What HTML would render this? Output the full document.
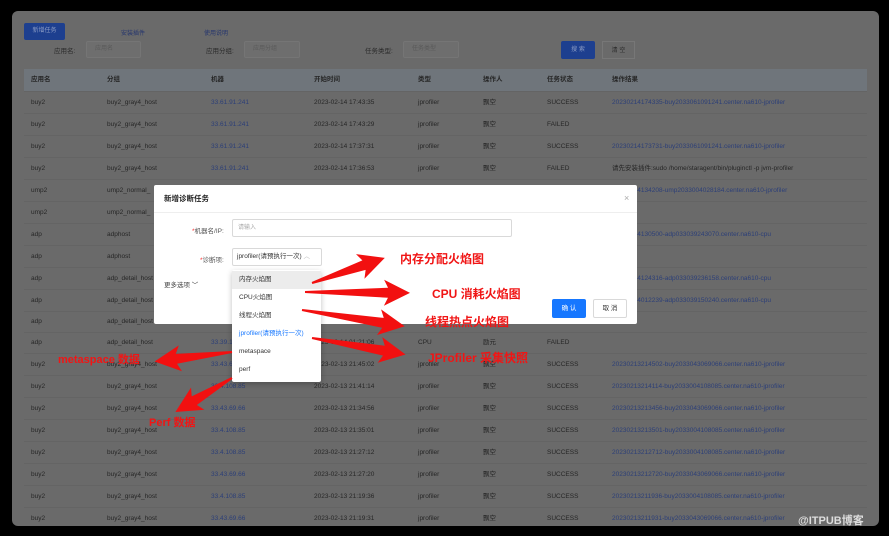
<!DOCTYPE html>
<html><head><meta charset="utf-8"><style>
*{margin:0;padding:0;box-sizing:border-box}
body{width:889px;height:536px;background:#000;font-family:"Liberation Sans","Noto Sans CJK SC",sans-serif;position:relative;overflow:hidden;font-size:7px;color:#262626}
.panel{position:absolute;left:12px;top:11px;width:867px;height:515px;background:#6a6a6a;border-radius:6px;overflow:hidden}
.abs{position:absolute;white-space:nowrap}
.btn{position:absolute;background:#1d3f8f;color:#8a9bc4;font-size:6px;text-align:center;border-radius:2px}
.inp{position:absolute;border:1px solid #757575;background:#6e6e6e;color:#595959;font-size:6px;padding-left:8px;border-radius:2px;line-height:15px;height:17px}
.lbl{position:absolute;font-size:6.5px;color:#2a2a2a}
.row{position:absolute;left:12px;width:843px;height:22px;border-bottom:1px solid #646464}
.row span{position:absolute;top:7px;font-size:6.5px;white-space:nowrap;line-height:8px}
.lk{color:#2c3f78}
.modal{position:absolute;left:154px;top:185px;width:483px;height:139px;background:#fff;border-radius:2px}
.dd{position:absolute;left:232px;top:270px;width:89px;height:112px;background:#fff;border-radius:2px;box-shadow:0 2px 6px rgba(0,0,0,.25)}
.dd div{height:18px;line-height:18px;padding-left:7px;font-size:6.5px;color:#333}
.red{position:absolute;color:#f01515;font-weight:bold;font-size:12px;white-space:nowrap}
</style></head><body>
<div class="panel">
<div class="btn" style="left:12px;top:12px;width:41px;height:17px;line-height:17px">新增任务</div>
<div class="abs" style="left:109px;top:17px;font-size:6px;color:#24356e">安装插件</div>
<div class="abs" style="left:192px;top:17px;font-size:6px;color:#24356e">使用说明</div>
<div class="lbl" style="left:42px;top:34px">应用名:</div>
<div class="inp" style="left:74px;top:30px;width:55px">应用名</div>
<div class="lbl" style="left:194px;top:34px">应用分组:</div>
<div class="inp" style="left:232px;top:30px;width:56px">应用分组</div>
<div class="lbl" style="left:353px;top:34px">任务类型:</div>
<div class="inp" style="left:391px;top:30px;width:56px">任务类型</div>
<div class="btn" style="left:549px;top:30px;width:34px;height:18px;line-height:18px">搜 索</div>
<div class="abs" style="left:590px;top:30px;width:33px;height:18px;line-height:18px;border:1px solid #777;text-align:center;font-size:6px;color:#2a2a2a">清 空</div>
<div class="row" style="top:58px;background:#6f757b;height:23px"><span style="left:7px;font-weight:bold">应用名</span><span style="left:83px;font-weight:bold">分组</span><span style="left:187px;font-weight:bold">机器</span><span style="left:290px;font-weight:bold">开始时间</span><span style="left:394px;font-weight:bold">类型</span><span style="left:459px;font-weight:bold">操作人</span><span style="left:523px;font-weight:bold">任务状态</span><span style="left:588px;font-weight:bold">操作结果</span></div>
<div class="row" style="top:81px"><span style="left:7px">buy2</span><span style="left:83px">buy2_gray4_host</span><span class="lk" style="left:187px">33.61.91.241</span><span style="left:290px">2023-02-14 17:43:35</span><span style="left:394px">jprofiler</span><span style="left:459px">飘空</span><span style="left:523px">SUCCESS</span><span class="lk" style="left:588px">20230214174335-buy2033061091241.center.na610-jprofiler</span></div>
<div class="row" style="top:103px"><span style="left:7px">buy2</span><span style="left:83px">buy2_gray4_host</span><span class="lk" style="left:187px">33.61.91.241</span><span style="left:290px">2023-02-14 17:43:29</span><span style="left:394px">jprofiler</span><span style="left:459px">飘空</span><span style="left:523px">FAILED</span></div>
<div class="row" style="top:125px"><span style="left:7px">buy2</span><span style="left:83px">buy2_gray4_host</span><span class="lk" style="left:187px">33.61.91.241</span><span style="left:290px">2023-02-14 17:37:31</span><span style="left:394px">jprofiler</span><span style="left:459px">飘空</span><span style="left:523px">SUCCESS</span><span class="lk" style="left:588px">20230214173731-buy2033061091241.center.na610-jprofiler</span></div>
<div class="row" style="top:147px"><span style="left:7px">buy2</span><span style="left:83px">buy2_gray4_host</span><span class="lk" style="left:187px">33.61.91.241</span><span style="left:290px">2023-02-14 17:36:53</span><span style="left:394px">jprofiler</span><span style="left:459px">飘空</span><span style="left:523px">FAILED</span><span style="left:588px">请先安装插件:sudo /home/staragent/bin/pluginctl -p jvm-profiler</span></div>
<div class="row" style="top:169px"><span style="left:7px">ump2</span><span style="left:83px">ump2_normal_</span><span class="lk" style="left:588px">20230214134208-ump2033004028184.center.na610-jprofiler</span></div>
<div class="row" style="top:191px"><span style="left:7px">ump2</span><span style="left:83px">ump2_normal_</span></div>
<div class="row" style="top:213px"><span style="left:7px">adp</span><span style="left:83px">adphost</span><span class="lk" style="left:588px">20230214130500-adp033039243070.center.na610-cpu</span></div>
<div class="row" style="top:235px"><span style="left:7px">adp</span><span style="left:83px">adphost</span></div>
<div class="row" style="top:257px"><span style="left:7px">adp</span><span style="left:83px">adp_detail_host</span><span class="lk" style="left:588px">20230214124316-adp033039236158.center.na610-cpu</span></div>
<div class="row" style="top:279px"><span style="left:7px">adp</span><span style="left:83px">adp_detail_host</span><span class="lk" style="left:588px">20230214012239-adp033039150240.center.na610-cpu</span></div>
<div class="row" style="top:300px"><span style="left:7px">adp</span><span style="left:83px">adp_detail_host</span></div>
<div class="row" style="top:321px"><span style="left:7px">adp</span><span style="left:83px">adp_detail_host</span><span class="lk" style="left:187px">33.39.1</span><span style="left:290px">2023-02-14 01:21:06</span><span style="left:394px">CPU</span><span style="left:459px">励元</span><span style="left:523px">FAILED</span></div>
<div class="row" style="top:343px"><span style="left:7px">buy2</span><span style="left:83px">buy2_gray4_host</span><span class="lk" style="left:187px">33.43.6</span><span style="left:290px">2023-02-13 21:45:02</span><span style="left:394px">jprofiler</span><span style="left:459px">飘空</span><span style="left:523px">SUCCESS</span><span class="lk" style="left:588px">20230213214502-buy2033043069066.center.na610-jprofiler</span></div>
<div class="row" style="top:365px"><span style="left:7px">buy2</span><span style="left:83px">buy2_gray4_host</span><span class="lk" style="left:187px">33.4.108.85</span><span style="left:290px">2023-02-13 21:41:14</span><span style="left:394px">jprofiler</span><span style="left:459px">飘空</span><span style="left:523px">SUCCESS</span><span class="lk" style="left:588px">20230213214114-buy2033004108085.center.na610-jprofiler</span></div>
<div class="row" style="top:387px"><span style="left:7px">buy2</span><span style="left:83px">buy2_gray4_host</span><span class="lk" style="left:187px">33.43.69.66</span><span style="left:290px">2023-02-13 21:34:56</span><span style="left:394px">jprofiler</span><span style="left:459px">飘空</span><span style="left:523px">SUCCESS</span><span class="lk" style="left:588px">20230213213456-buy2033043069066.center.na610-jprofiler</span></div>
<div class="row" style="top:409px"><span style="left:7px">buy2</span><span style="left:83px">buy2_gray4_host</span><span class="lk" style="left:187px">33.4.108.85</span><span style="left:290px">2023-02-13 21:35:01</span><span style="left:394px">jprofiler</span><span style="left:459px">飘空</span><span style="left:523px">SUCCESS</span><span class="lk" style="left:588px">20230213213501-buy2033004108085.center.na610-jprofiler</span></div>
<div class="row" style="top:431px"><span style="left:7px">buy2</span><span style="left:83px">buy2_gray4_host</span><span class="lk" style="left:187px">33.4.108.85</span><span style="left:290px">2023-02-13 21:27:12</span><span style="left:394px">jprofiler</span><span style="left:459px">飘空</span><span style="left:523px">SUCCESS</span><span class="lk" style="left:588px">20230213212712-buy2033004108085.center.na610-jprofiler</span></div>
<div class="row" style="top:453px"><span style="left:7px">buy2</span><span style="left:83px">buy2_gray4_host</span><span class="lk" style="left:187px">33.43.69.66</span><span style="left:290px">2023-02-13 21:27:20</span><span style="left:394px">jprofiler</span><span style="left:459px">飘空</span><span style="left:523px">SUCCESS</span><span class="lk" style="left:588px">20230213212720-buy2033043069066.center.na610-jprofiler</span></div>
<div class="row" style="top:475px"><span style="left:7px">buy2</span><span style="left:83px">buy2_gray4_host</span><span class="lk" style="left:187px">33.4.108.85</span><span style="left:290px">2023-02-13 21:19:36</span><span style="left:394px">jprofiler</span><span style="left:459px">飘空</span><span style="left:523px">SUCCESS</span><span class="lk" style="left:588px">20230213211936-buy2033004108085.center.na610-jprofiler</span></div>
<div class="row" style="top:497px"><span style="left:7px">buy2</span><span style="left:83px">buy2_gray4_host</span><span class="lk" style="left:187px">33.43.69.66</span><span style="left:290px">2023-02-13 21:19:31</span><span style="left:394px">jprofiler</span><span style="left:459px">飘空</span><span style="left:523px">SUCCESS</span><span class="lk" style="left:588px">20230213211931-buy2033043069066.center.na610-jprofiler</span></div>
</div>

<div class="modal">
<div class="abs" style="left:10px;top:8px;font-size:7.5px;font-weight:bold;color:#222">新增诊断任务</div>
<div class="abs" style="left:470px;top:8px;font-size:9px;color:#aaa">×</div>
<div style="position:absolute;left:0;top:27px;width:483px;border-top:1px solid #eee"></div>
<div class="abs" style="left:38px;top:40px;font-size:6.5px;color:#555"><span style="color:#f33">*</span>机器名/IP:</div>
<div class="abs" style="left:78px;top:34px;width:280px;height:18px;border:1px solid #d9d9d9;border-radius:2px;font-size:6px;color:#aaa;padding-left:5px;line-height:16px">请输入</div>
<div class="abs" style="left:46px;top:69px;font-size:6.5px;color:#555"><span style="color:#f33">*</span>诊断项:</div>
<div class="abs" style="left:78px;top:63px;width:90px;height:18px;border:1px solid #d9d9d9;border-radius:2px;font-size:6.5px;color:#333;padding-left:4px;line-height:16px">jprofiler(请预执行一次) <span style="color:#bbb">︿</span></div>
<div class="abs" style="left:10px;top:94px;font-size:6.5px;color:#444">更多选项 ﹀</div>
<div class="abs" style="left:398px;top:114px;width:34px;height:19px;background:#1677ff;color:#fff;font-size:6.5px;text-align:center;line-height:19px;border-radius:2px">确 认</div>
<div class="abs" style="left:439px;top:114px;width:34px;height:19px;border:1px solid #d9d9d9;color:#333;font-size:6.5px;text-align:center;line-height:17px;border-radius:2px">取 消</div>
</div>
<div class="dd">
<div style="background:#ececec;margin-top:1px">内存火焰图</div>
<div>CPU火焰图</div>
<div>线程火焰图</div>
<div style="color:#1677ff">jprofiler(请预执行一次)</div>
<div>metaspace</div>
<div>perf</div>
</div>

<svg style="position:absolute;left:0;top:0" width="889" height="536">
<g fill="#f21010">
<polygon transform="translate(312,283) rotate(-19)" points="0,-1 55,-5 51,-13 77,0 51,13 55,5 0,1"/>
<polygon transform="translate(305,292) rotate(0.5)" points="0,-1 83,-5 79,-13 105,0 79,13 83,5 0,1"/>
<polygon transform="translate(302,310) rotate(9)" points="0,-1 82,-5 78,-13 104,0 78,13 82,5 0,1"/>
<polygon transform="translate(312,338) rotate(10)" points="0,-1 73,-5 69,-13 95,0 69,13 73,5 0,1"/>
<polygon transform="translate(232,352) rotate(173)" points="0,-1 56,-5 52,-13 78,0 52,13 56,5 0,1"/>
<polygon transform="translate(232,378) rotate(149)" points="0,-1 44,-5 40,-13 66,0 40,13 44,5 0,1"/>
</g>
</svg>
<div class="red" style="left:400px;top:250px">内存分配火焰图</div>
<div class="red" style="left:432px;top:285px">CPU 消耗火焰图</div>
<div class="red" style="left:425px;top:313px">线程热点火焰图</div>
<div class="red" style="left:428px;top:349px">JProfiler 采集快照</div>
<div class="red" style="left:58px;top:351px;font-size:11px">metaspace 数据</div>
<div class="red" style="left:149px;top:414px;font-size:11px">Perf 数据</div>
<div class="abs" style="left:798px;top:512px;color:#ddd;font-size:11px;font-weight:bold">@ITPUB博客</div>
</body></html>
